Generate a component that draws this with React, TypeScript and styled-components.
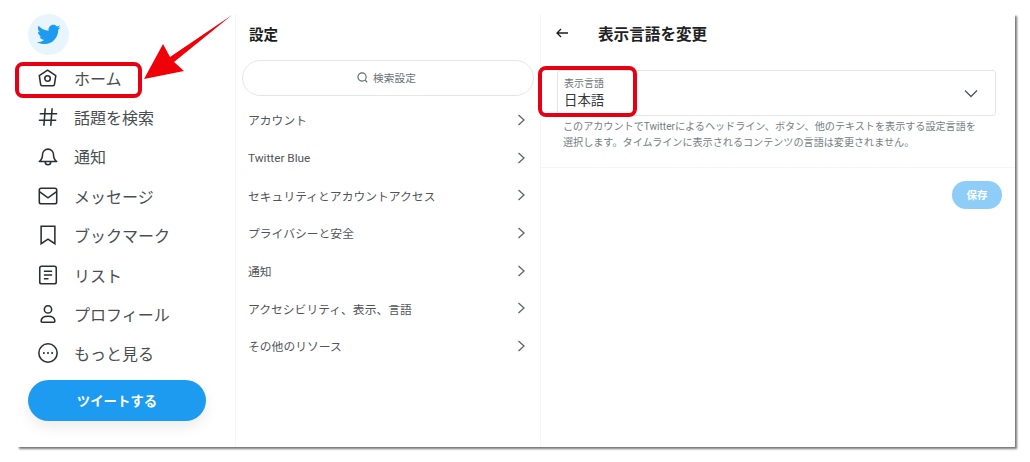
import React from "react";
import styled, { createGlobalStyle } from "styled-components";

const GlobalStyle = createGlobalStyle`
  html, body {
    margin: 0;
    padding: 0;
    background: #ffffff;
    font-family: Roboto, "Noto Sans CJK JP", "Noto Sans", sans-serif;
  }
`;

const Page = styled.div`
  position: relative;
  width: 1030px;
  height: 462px;
  padding: 14px 15px 15px 17px;
  box-sizing: border-box;
  overflow: hidden;
`;

const Frame = styled.div`
  display: grid;
  grid-template-columns: 219px 305px 1fr;
  height: 100%;
  background: #ffffff;
  box-shadow: 2px 2px 2px #777777;
`;

const Sidebar = styled.aside`
  display: flex;
  flex-direction: column;
  padding-left: 11px;
  border-right: 1px solid #f3f5f6;
`;

const Logo = styled.div`
  width: 41px;
  height: 41px;
  border-radius: 50%;
  background: #e8f5fd;
  display: flex;
  align-items: center;
  justify-content: center;
  margin-bottom: 3px;
  svg {
    width: 25px;
    height: 25px;
    fill: #1d9bf0;
  }
`;

const NavList = styled.nav`
  display: flex;
  flex-direction: column;
`;

const NavItem = styled.div`
  display: flex;
  align-items: center;
  height: 39.4px;
  padding-left: 9px;
  gap: 15px;
  font-size: 16px;
  color: #4a4e52;
  svg {
    width: 22px;
    height: 22px;
    fill: none;
    stroke: #2b2f33;
    stroke-width: 1.7;
    flex: none;
  }
`;

const TweetButton = styled.div`
  width: 178px;
  height: 41px;
  margin-top: 7px;
  padding-bottom: 2px;
  box-sizing: border-box;
  border-radius: 21px;
  background: #1d9bf0;
  color: #ffffff;
  font-size: 13.4px;
  font-weight: 700;
  display: flex;
  align-items: center;
  justify-content: center;
  box-shadow: 0 6px 14px rgba(0, 0, 0, 0.08);
`;

const SettingsColumn = styled.section`
  display: flex;
  flex-direction: column;
  padding: 0 6px;
  border-right: 1px solid #f3f5f6;
`;

const ColumnTitle = styled.h2`
  margin: 0;
  height: 40px;
  padding: 0 0 2px 7px;
  box-sizing: border-box;
  display: flex;
  align-items: center;
  font-size: 14.5px;
  font-weight: 700;
  color: #1a1d20;
`;

const SearchBox = styled.div`
  height: 36px;
  margin: 6px 0 5px;
  padding: 0 3px 2px 0;
  box-sizing: border-box;
  border: 1px solid #e4e7e9;
  border-radius: 18px;
  display: flex;
  align-items: center;
  justify-content: center;
  gap: 5px;
  font-size: 10.7px;
  color: #6a7278;
  svg {
    width: 11px;
    height: 11px;
    fill: none;
    stroke: #5f676d;
    stroke-width: 1.2;
  }
`;

const MenuRow = styled.div`
  display: flex;
  align-items: center;
  justify-content: space-between;
  height: 37.7px;
  padding: 0 8px 0 6px;
  font-size: 11.8px;
  color: #515559;
  svg {
    width: 10px;
    height: 12px;
    fill: none;
    stroke: #5f656a;
    stroke-width: 1.3;
  }
`;

const DetailColumn = styled.section`
  display: flex;
  flex-direction: column;
`;

const DetailHeader = styled.header`
  display: flex;
  align-items: center;
  height: 40px;
  padding: 0 0 2px 15px;
  box-sizing: border-box;
  gap: 30px;
  svg {
    width: 12px;
    height: 10px;
    fill: none;
    stroke: #1a1d20;
    stroke-width: 1.3;
  }
`;

const DetailTitle = styled.h2`
  margin: 0;
  font-size: 15.6px;
  font-weight: 700;
  color: #1f2225;
`;

const DetailBody = styled.div`
  padding: 16px 19px 0 16px;
  height: 97px;
  box-sizing: content-box;
  border-bottom: 1px solid #f3f5f6;
`;

const SelectBox = styled.div`
  height: 44px;
  border: 1px solid #e4e7e9;
  border-radius: 3px;
  padding: 0 17px 0 6px;
  display: flex;
  align-items: center;
  justify-content: space-between;
  svg {
    width: 14px;
    height: 9px;
    fill: none;
    stroke: #50565b;
    stroke-width: 1.3;
  }
`;

const SelectText = styled.div`
  display: flex;
  flex-direction: column;
`;

const SelectLabel = styled.span`
  font-size: 10px;
  line-height: 15px;
  color: #6b7277;
`;

const SelectValue = styled.span`
  font-size: 13.4px;
  line-height: 19px;
  color: #33373a;
`;

const Description = styled.p`
  margin: 3px 0 0 6px;
  font-size: 10.1px;
  line-height: 16px;
  color: #767d82;
  white-space: nowrap;
`;

const Actions = styled.div`
  display: flex;
  justify-content: flex-end;
  padding: 13px 13px 0 0;
`;

const SaveButton = styled.div`
  width: 50px;
  height: 28px;
  padding-bottom: 1px;
  box-sizing: border-box;
  border-radius: 14px;
  background: #8ecdf8;
  color: #ffffff;
  font-size: 10.5px;
  font-weight: 700;
  display: flex;
  align-items: center;
  justify-content: center;
`;

const Highlight = styled.div<{ $left: number; $top: number; $width: number; $height: number }>`
  position: absolute;
  left: ${(p) => p.$left}px;
  top: ${(p) => p.$top}px;
  width: ${(p) => p.$width}px;
  height: ${(p) => p.$height}px;
  box-sizing: border-box;
  border: 4px solid #e60012;
  border-radius: 8px;
`;

const Arrow = styled.svg`
  position: absolute;
  left: 0;
  top: 0;
  width: 240px;
  height: 100px;
  fill: #f00008;
`;

const birdPath =
  "M23.643 4.937c-.835.37-1.732.62-2.675.727.962-.576 1.7-1.49 2.048-2.578-.9.534-1.897.922-2.958 1.13-.85-.904-2.06-1.47-3.4-1.47-2.572 0-4.658 2.086-4.658 4.66 0 .364.042.718.12 1.06-3.873-.195-7.304-2.05-9.602-4.868-.4.69-.63 1.49-.63 2.342 0 1.616.823 3.043 2.072 3.878-.764-.025-1.482-.234-2.11-.583v.06c0 2.257 1.605 4.14 3.737 4.568-.392.106-.803.162-1.227.162-.3 0-.593-.028-.877-.082.593 1.85 2.313 3.198 4.352 3.234-1.595 1.25-3.604 1.995-5.786 1.995-.376 0-.747-.022-1.112-.065 2.062 1.323 4.51 2.093 7.14 2.093 8.57 0 13.255-7.098 13.255-13.254 0-.2-.005-.402-.014-.602.91-.658 1.7-1.477 2.323-2.41z";

const navItems: { label: string; icon: React.ReactNode }[] = [
  {
    label: "ホーム",
    icon: (
      <>
        <path d="M11.500 3.500 20.500 9.500 19 19.300a1.400 1.400 0 0 1-1.400 1.200H5.400A1.400 1.400 0 0 1 4 19.300L2.500 9.500Z" strokeLinejoin="round" />
        <circle cx="11.500" cy="12.500" r="3" />
      </>
    ),
  },
  {
    label: "話題を検索",
    icon: <path d="M3 8.500h19M2 15.500h19M9 2.500 7.500 21.500M16.500 2.500 15 21.500" />,
  },
  {
    label: "通知",
    icon: (
      <>
        <path d="M2.500 18c2-1.500 3.500-3.500 3.500-7.500a6 6 0 0 1 12 0c0 4 1.500 6 3.500 7.500Z" strokeLinejoin="round" />
        <path d="M9 18.500a3 3 0 0 0 6 0" />
      </>
    ),
  },
  {
    label: "メッセージ",
    icon: (
      <>
        <rect x="2.500" y="3.500" width="19" height="17" rx="2" />
        <path d="m3 7.500 9 6.500 9-6.500" />
      </>
    ),
  },
  {
    label: "ブックマーク",
    icon: <path d="M4.500 2.500h15v19L12 16.500 4.500 21.500Z" />,
  },
  {
    label: "リスト",
    icon: (
      <>
        <rect x="3" y="2.500" width="18" height="19" rx="2" />
        <path d="M7.500 8h9M7.500 12h9M7.500 16h5" />
      </>
    ),
  },
  {
    label: "プロフィール",
    icon: (
      <>
        <circle cx="12" cy="7" r="4" />
        <path d="M4.500 20c0-3.500 3-5.500 7.500-5.500s7.500 2 7.500 5.500a1 1 0 0 1-1 1h-13a1 1 0 0 1-1-1Z" />
      </>
    ),
  },
  {
    label: "もっと見る",
    icon: (
      <>
        <circle cx="12" cy="12" r="10" />
        <path d="M7.500 12h.01M12 12h.01M16.500 12h.01" strokeWidth="2.200" strokeLinecap="round" />
      </>
    ),
  },
];

const menuItems = [
  "アカウント",
  "Twitter Blue",
  "セキュリティとアカウントアクセス",
  "プライバシーと安全",
  "通知",
  "アクセシビリティ、表示、言語",
  "その他のリソース",
];

const App: React.FC = () => {
  return (
    <>
      <GlobalStyle />
      <Page>
        <Frame>
          <Sidebar>
            <Logo>
              <svg viewBox="0 0 24 24">
                <path d={birdPath} />
              </svg>
            </Logo>
            <NavList>
              {navItems.map((item) => (
                <NavItem key={item.label}>
                  <svg viewBox="0 0 24 24">{item.icon}</svg>
                  <span>{item.label}</span>
                </NavItem>
              ))}
            </NavList>
            <TweetButton>ツイートする</TweetButton>
          </Sidebar>

          <SettingsColumn>
            <ColumnTitle>設定</ColumnTitle>
            <SearchBox>
              <svg viewBox="0 0 12 12">
                <circle cx="5.500" cy="5.500" r="4.500" />
                <path d="m9 9 2.200 2.200" />
              </svg>
              検索設定
            </SearchBox>
            {menuItems.map((label) => (
              <MenuRow key={label}>
                <span>{label}</span>
                <svg viewBox="0 0 10 12">
                  <path d="m2.500 1 5.500 5-5.500 5" />
                </svg>
              </MenuRow>
            ))}
          </SettingsColumn>

          <DetailColumn>
            <DetailHeader>
              <svg viewBox="0 0 12 10">
                <path d="M12 5H1M5 1 1 5l4 4" />
              </svg>
              <DetailTitle>表示言語を変更</DetailTitle>
            </DetailHeader>
            <DetailBody>
              <SelectBox>
                <SelectText>
                  <SelectLabel>表示言語</SelectLabel>
                  <SelectValue>日本語</SelectValue>
                </SelectText>
                <svg viewBox="0 0 14 9">
                  <path d="m1 1.500 6 6 6-6" />
                </svg>
              </SelectBox>
              <Description>
                このアカウントでTwitterによるヘッドライン、ボタン、他のテキストを表示する設定言語を
                <br />
                選択します。タイムラインに表示されるコンテンツの言語は変更されません。
              </Description>
            </DetailBody>
            <Actions>
              <SaveButton>保存</SaveButton>
            </Actions>
          </DetailColumn>
        </Frame>

        <Highlight $left={15} $top={62} $width={127} $height={36} />
        <Highlight $left={538} $top={66} $width={99} $height={51} />
        <Arrow viewBox="0 0 240 100">
          <polygon points="144,79 163,44 170,57 232,15 174,62 184,71" />
        </Arrow>
      </Page>
    </>
  );
};

export default App;
